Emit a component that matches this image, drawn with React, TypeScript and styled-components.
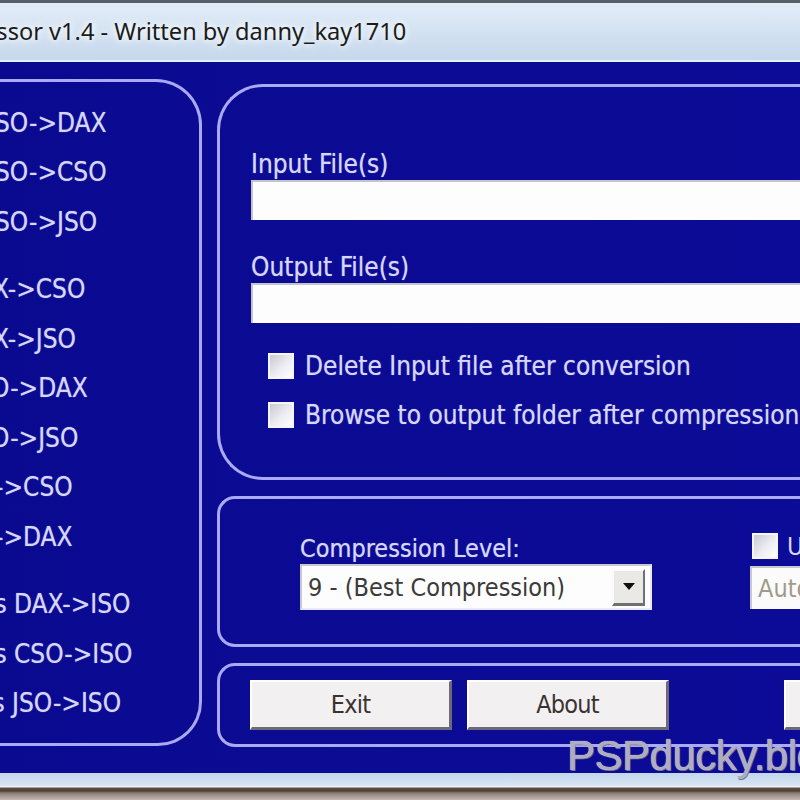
import React from "react";
import styled, { createGlobalStyle } from "styled-components";

const UI = '"DejaVu Sans Condensed", "DejaVu Sans", Tahoma, sans-serif';
const LINE = "#a9a9f6";
const BLUE = "#0b0b95";
const TEXT = "#d6d6ff";

const Global = createGlobalStyle`
  html, body { margin: 0; padding: 0; width: 800px; height: 800px; overflow: hidden; background: ${BLUE}; }
  #root { width: 800px; height: 800px; overflow: hidden; }
`;

const Window = styled.div`
  position: relative;
  width: 1300px;
  height: 800px;
  margin-left: -120px;
  display: flex;
  flex-direction: column;
`;

const TitleBar = styled.div`
  height: 62px;
  box-sizing: border-box;
  border-top: 3px solid #5a6068;
  border-bottom: 2px solid #e6eef8;
  background: linear-gradient(180deg, #e3edf8 0%, #d3e2f2 50%, #c6d8ec 100%);
  display: flex;
  align-items: center;
  padding-left: 28px;
`;

const TitleText = styled.span`
  font-family: "Noto Sans", "Open Sans", sans-serif;
  font-size: 23.6px;
  color: #1c1c1c;
  text-shadow: 0 0 6px #ffffff, 0 0 10px #ffffff;
  margin-top: -2px;
`;

const Client = styled.div`
  flex: 1;
  background: linear-gradient(90deg, #0a0a90 0%, #0b0b96 60%, #0d0d9c 100%);
  display: flex;
  align-items: flex-start;
  gap: 15px;
  padding: 17px 0 0 10px;
  overflow: hidden;
`;

const LeftPanel = styled.div`
  flex-shrink: 0;
  width: 312px;
  height: 667px;
  box-sizing: border-box;
  border: 3px solid ${LINE};
  border-left: none;
  border-radius: 0 46px 44px 0;
  padding-top: 16px;
  display: flex;
  flex-direction: column;
  gap: 18px;
`;

const Group = styled.div`
  display: flex;
  flex-direction: column;
`;

const Item = styled.div`
  height: 49.5px;
  display: flex;
  align-items: center;
  font-family: ${UI};
  font-size: 26px;
  color: ${TEXT};
  text-shadow: 0 0 1px rgba(214, 214, 255, 0.6);
  white-space: pre;
`;

const Prefix = styled.span<{ $w: number }>`
  display: inline-flex;
  justify-content: flex-end;
  width: ${(p) => p.$w}px;
  flex-shrink: 0;
  white-space: pre;
`;

const RightCol = styled.div`
  flex-shrink: 0;
  display: flex;
  flex-direction: column;
  margin-top: 5px;
  gap: 16px;
  width: 900px;
`;

const Panel = styled.div<{ $r: number; $h: number }>`
  height: ${(p) => p.$h}px;
  box-sizing: border-box;
  border: 3px solid ${LINE};
  border-right: none;
  border-radius: ${(p) => p.$r}px 0 0 ${(p) => p.$r}px;
`;

const FilePanel = styled(Panel)`
  padding: 60px 0 0 31px;
  display: flex;
  flex-direction: column;
`;

const FieldLabel = styled.div`
  height: 33px;
  display: flex;
  align-items: center;
  font-family: ${UI};
  font-size: 26px;
  color: ${TEXT};
  text-shadow: 0 0 1px rgba(214, 214, 255, 0.6);
`;

const TextField = styled.div`
  height: 40px;
  box-sizing: border-box;
  background: #fdfdfd;
  border-top: 2px solid #c4c4cc;
  border-left: 2px solid #c4c4cc;
  margin-bottom: 30px;
`;

const CheckRow = styled.div`
  display: flex;
  align-items: center;
  gap: 11px;
  height: 26px;
  margin-left: 17px;
  margin-bottom: 23px;
  font-family: ${UI};
  font-size: 26px;
  color: ${TEXT};
  text-shadow: 0 0 1px rgba(214, 214, 255, 0.6);
  &:first-of-type { margin-top: 2px; }
`;

const Box = styled.span`
  width: 26px;
  height: 26px;
  box-sizing: border-box;
  background: linear-gradient(135deg, #c9c9d2 0%, #ececf2 55%, #ffffff 100%);
  border: 2px solid #f4f4fb;
  flex-shrink: 0;
`;

const CompPanel = styled(Panel)`
  padding: 34px 0 0 80px;
  display: flex;
  gap: 98px;
`;

const Column = styled.div`
  display: flex;
  flex-direction: column;
`;

const SmallLabel = styled.div`
  height: 30px;
  display: flex;
  align-items: center;
  font-family: ${UI};
  font-size: 25px;
  color: ${TEXT};
  text-shadow: 0 0 1px rgba(214, 214, 255, 0.6);
`;

const Select = styled.div`
  width: 352px;
  height: 46px;
  margin-top: 1px;
  box-sizing: border-box;
  background: #fdfdfd;
  border-top: 2px solid #c8c8d0;
  border-left: 2px solid #c8c8d0;
  border-right: 2px solid #e8e8f8;
  border-bottom: 2px solid #e8e8f8;
  display: flex;
  align-items: center;
  justify-content: space-between;
  padding: 0 5px 0 6px;
  font-family: ${UI};
  font-size: 25px;
  color: #3a3a3a;
`;

const DropButton = styled.span`
  width: 33px;
  height: 37px;
  box-sizing: border-box;
  background: #ebe9e6;
  border-top: 2px solid #fbfbfb;
  border-left: 2px solid #fbfbfb;
  border-right: 2px solid #707070;
  border-bottom: 3px solid #707070;
  display: flex;
  align-items: center;
  justify-content: center;
`;

const Arrow = styled.span`
  width: 0;
  height: 0;
  border-left: 6px solid transparent;
  border-right: 6px solid transparent;
  border-top: 7px solid #111111;
`;

const RightCheck = styled.div`
  display: flex;
  align-items: center;
  gap: 9px;
  height: 26px;
  margin-left: 2px;
  font-family: ${UI};
  font-size: 25px;
  color: ${TEXT};
`;

const DisabledField = styled.div`
  width: 300px;
  height: 43px;
  margin-top: 7px;
  box-sizing: border-box;
  background: #fbfbfb;
  border-top: 2px solid #c8c8d0;
  border-left: 2px solid #c8c8d0;
  display: flex;
  align-items: center;
  padding-left: 6px;
  font-family: ${UI};
  font-size: 25px;
  color: #a09a88;
`;

const ButtonPanel = styled(Panel)`
  padding: 14px 0 0 30px;
  display: flex;
  gap: 15px;
`;

const Button = styled.div<{ $gapBefore?: number }>`
  width: 202px;
  height: 50px;
  box-sizing: border-box;
  margin-left: ${(p) => p.$gapBefore ?? 0}px;
  background: #f2f0f0;
  border-top: 2px solid #ffffff;
  border-left: 2px solid #ffffff;
  border-right: 3px solid #6c6a78;
  border-bottom: 3px solid #6c6a78;
  display: flex;
  align-items: center;
  justify-content: center;
  font-family: ${UI};
  font-size: 25px;
  letter-spacing: -0.8px;
  color: #3a3232;
`;

const BottomFrame = styled.div`
  height: 27px;
  background: linear-gradient(
    180deg,
    #c3d5ec 0px,
    #d6e4f3 12px,
    #eef4fa 14px,
    #5e4e42 15px,
    #4e4036 18px,
    #8a7e74 20px,
    #c2bab2 27px
  );
`;

const Watermark = styled.div`
  position: absolute;
  left: 687px;
  top: 735px;
  font-family: "Liberation Sans", Arial, sans-serif;
  font-size: 42px;
  line-height: 1;
  color: #adadbf;
  letter-spacing: -0.5px;
  text-shadow: 0 0 1px #e8e8f4, 1px 1px 0 #6a6a80;
  white-space: nowrap;
`;

const groups: { prefix: string; text: string; w: number }[][] = [
  [
    { prefix: "I", text: "SO->DAX", w: 105 },
    { prefix: "I", text: "SO->CSO", w: 105 },
    { prefix: "I", text: "SO->JSO", w: 105 },
  ],
  [
    { prefix: "DA", text: "X->CSO", w: 103 },
    { prefix: "DA", text: "X->JSO", w: 103 },
    { prefix: "CS", text: "O->DAX", w: 101 },
    { prefix: "CS", text: "O->JSO", w: 101 },
    { prefix: "JSO", text: "->CSO", w: 105 },
    { prefix: "JSO", text: "->DAX", w: 105 },
  ],
  [
    { prefix: "Decompress ", text: "DAX->ISO", w: 124 },
    { prefix: "Decompress ", text: "CSO->ISO", w: 124 },
    { prefix: "Decompress ", text: "JSO->ISO", w: 122 },
  ],
];

export default function App() {
  return (
    <>
      <Global />
      <Window>
        <TitleBar>
          <TitleText>Compressor v1.4 - Written by danny_kay1710</TitleText>
        </TitleBar>
        <Client>
          <LeftPanel>
            {groups.map((g, gi) => (
              <Group key={gi}>
                {g.map((it, i) => (
                  <Item key={i}>
                    <Prefix $w={it.w}>{it.prefix}</Prefix>
                    {it.text}
                  </Item>
                ))}
              </Group>
            ))}
          </LeftPanel>
          <RightCol>
            <FilePanel $r={46} $h={396}>
              <FieldLabel>Input File(s)</FieldLabel>
              <TextField />
              <FieldLabel>Output File(s)</FieldLabel>
              <TextField />
              <CheckRow>
                <Box />
                Delete Input file after conversion
              </CheckRow>
              <CheckRow>
                <Box />
                Browse to output folder after compression
              </CheckRow>
            </FilePanel>
            <CompPanel $r={18} $h={151}>
              <Column>
                <SmallLabel>Compression Level:</SmallLabel>
                <Select>
                  9 - (Best Compression)
                  <DropButton>
                    <Arrow />
                  </DropButton>
                </Select>
              </Column>
              <Column>
                <RightCheck>
                  <Box />
                  Use Threads
                </RightCheck>
                <DisabledField>Auto</DisabledField>
              </Column>
            </CompPanel>
            <ButtonPanel $r={18} $h={84}>
              <Button>Exit</Button>
              <Button>About</Button>
              <Button $gapBefore={100}>Convert</Button>
            </ButtonPanel>
          </RightCol>
        </Client>
        <BottomFrame />
        <Watermark>PSPducky.blogspot.com</Watermark>
      </Window>
    </>
  );
}
